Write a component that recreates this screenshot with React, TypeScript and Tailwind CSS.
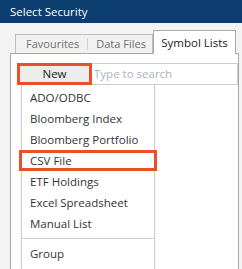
const items = [
  "ADO/ODBC",
  "Bloomberg Index",
  "Bloomberg Portfolio",
  "CSV File",
  "ETF Holdings",
  "Excel Spreadsheet",
  "Manual List",
];

export default function App() {
  return (
    <div
      className="h-[269px] w-[242px] overflow-hidden bg-[#f3f3f3] text-[11.5px] text-[#333]"
      style={{ fontFamily: '"Open Sans", sans-serif' }}
    >
      <div className="flex h-[23px] items-center bg-[#0b3d6e] pl-[10px] text-[11.5px] text-white">
        Select Security
      </div>

      <div className="flex h-[30px] items-end pl-[15px] pt-[7px] text-[11px]">
        <div className="flex h-[19px] w-[138px] items-center whitespace-nowrap border border-b-0 border-[#bdbdbd] bg-[#f1f1f1] text-[#707070]">
          <span className="pl-[10px]">Favourites</span>
          <span className="ml-[8px] mr-[8px] h-[12px] w-px bg-[#cfcfcf]" />
          <span>Data Files</span>
        </div>
        <div className="relative top-px flex h-[24px] w-[83px] items-center justify-center whitespace-nowrap border border-b-0 border-[#a9a9a9] bg-white text-[11.5px] text-[#222]">
          Symbol Lists
        </div>
      </div>

      <div className="ml-[10px] h-[216px] w-[229px] border-l border-r border-t border-[#a9a9a9] bg-white pt-[9px] pl-[6px]">
        <div className="flex h-[22px] items-stretch">
          <div className="flex w-[75px] items-center justify-center border-[3px] border-[#e8502a] bg-[#ececec] text-[#222]">
            New
          </div>
          <div className="flex flex-1 items-center border border-l-0 border-[#cccccc] pl-[2px] text-[#a9b3c2]">
            Type to search
          </div>
        </div>

        <div className="ml-[4px] w-[134px] rounded-b-[2px] border border-t-0 border-[#cccccc] bg-white pt-[2px] shadow-[0_1px_2px_rgba(0,0,0,0.12)]">
          {items.map((item) => (
            <div
              key={item}
              className={
                item === "CSV File"
                  ? "-mx-[3px] flex h-[21px] items-center border-[3px] border-[#e8502a] pl-[8px]"
                  : "flex h-[21px] items-center pl-[8px]"
              }
            >
              {item}
            </div>
          ))}
          <div className="my-[4px] h-px bg-[#d0d0d0]" />
          <div className="flex h-[21px] items-center pl-[8px]">Group</div>
          <div className="h-[5px]" />
        </div>
      </div>
    </div>
  );
}
